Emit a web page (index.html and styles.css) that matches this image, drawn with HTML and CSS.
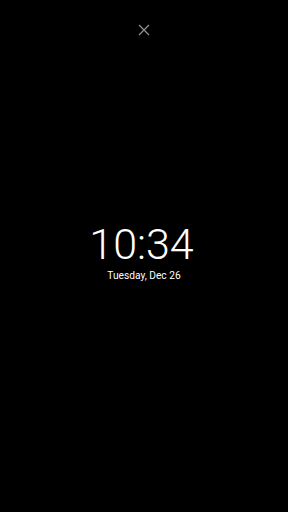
FILE: index.html
```html
<!DOCTYPE html>
<html>
<head>
<meta charset="utf-8">
<link rel="stylesheet" href="styles.css">
</head>
<body>
<div class="screen">
  <div class="top">
    <svg class="close" width="12" height="12" viewBox="0 0 12 12"><path d="M1 1L11 11M11 1L1 11" stroke="#8f8f8f" stroke-width="1.3" fill="none"/></svg>
  </div>
  <div class="clock">
    <div class="time">10:34</div>
    <div class="date">Tuesday, Dec 26</div>
  </div>
</div>
</body>
</html>
```
FILE: styles.css
```css
html, body { margin: 0; padding: 0; background: #000; }
.screen { width: 288px; height: 512px; display: flex; flex-direction: column; align-items: center; font-family: Roboto, sans-serif; color: #fff; }
.top { height: 60px; display: flex; align-items: center; justify-content: center; }
.close { display: block; }
.clock { margin-top: 163px; display: flex; flex-direction: column; align-items: center; }
.time { font-size: 43px; font-weight: 300; line-height: 43px; padding-right: 5px; }
.date { font-size: 10.2px; line-height: 12px; margin-top: 4px; }
```
